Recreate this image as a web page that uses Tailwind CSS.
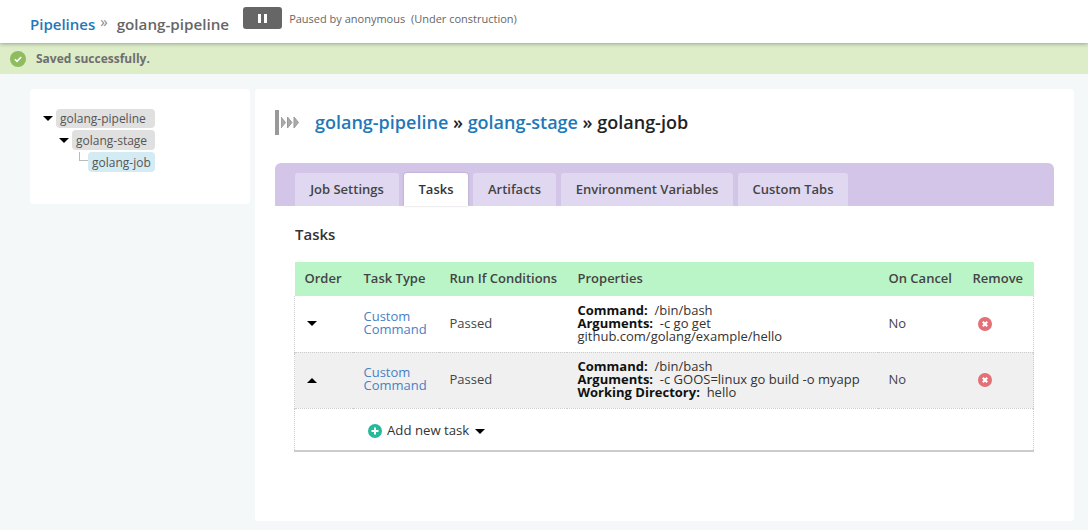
<!DOCTYPE html>
<html lang="en">
<head>
    <meta charset="UTF-8">
    <title>Job Tasks</title>
    <script src="https://cdn.jsdelivr.net/npm/@tailwindcss/browser@4"></script>
</head>
<body class="bg-[#f4f8f9] font-['Open_Sans',sans-serif] h-[530px] overflow-hidden text-[#333]">
    <!-- Header -->
    <div class="h-[43px] bg-white shadow-[0_1px_4px_rgba(0,0,0,0.3)] relative flex items-start pl-[30px]">
        <a class="text-[15px] font-semibold text-[#1f78b8] mt-[13px] leading-[22px]">Pipelines</a>
        <span class="text-[#888] text-[15px] ml-[5px] mt-[10px] leading-[22px]">»</span>
        <span class="text-[15.2px] font-semibold text-[#666] ml-[9px] mt-[13px] leading-[22px]">golang-pipeline</span>
        <div class="w-[39px] h-[22px] bg-[#666] rounded-[3px] ml-[14px] mt-[7px] flex items-center justify-center gap-[3px]">
            <span class="w-[3px] h-[9px] bg-white"></span>
            <span class="w-[3px] h-[9px] bg-white"></span>
        </div>
        <span class="text-[11px] text-[#666] ml-[7px] mt-[11px] leading-[16px] whitespace-pre">Paused by anonymous  (Under construction)</span>
    </div>

    <!-- Flash message -->
    <div class="h-[31px] bg-[#dcedc8] flex items-center pl-[10px]">
        <svg width="16" height="16" viewBox="0 0 16 16">
            <circle cx="8" cy="8" r="8" fill="#8fbc5f"/>
            <path d="M4.8 8.2l2.2 2.2 4.2-4.4" fill="none" stroke="#fff" stroke-width="1.6"/>
        </svg>
        <span class="text-[12px] font-bold text-[#6f6f6f] ml-[10px]">Saved successfully.</span>
    </div>

    <div class="flex pl-[30px] pt-[15px] gap-[5px]">
        <!-- Tree -->
        <div class="w-[220px] h-[115px] bg-white rounded-[3px] pt-[20px] pl-[13px] text-[12px] text-[#555] leading-[20px]">
            <div class="flex items-center">
                <span class="w-[13px] flex justify-start"><span class="border-x-[5px] border-x-transparent border-t-[5px] border-t-black"></span></span>
                <span class="w-[99px] h-[19px] bg-[#e0e0e0] rounded-[4px] pl-[4px]">golang-pipeline</span>
            </div>
            <div class="flex items-center mt-[2px] pl-[16px]">
                <span class="w-[13px] flex justify-start"><span class="border-x-[5px] border-x-transparent border-t-[5px] border-t-black"></span></span>
                <span class="w-[83px] h-[20px] bg-[#e0e0e0] rounded-[4px] pl-[4px] pt-px">golang-stage</span>
            </div>
            <div class="flex items-start mt-[2px] pl-[36px]">
                <span class="w-[9px] h-[9px] border-l border-b border-[#bbb]"></span>
                <span class="w-[67px] h-[20px] bg-[#d3ebf3] rounded-[4px] pl-[4px] pt-px">golang-job</span>
            </div>
        </div>

        <!-- Main card -->
        <div class="w-[819px] h-[432px] bg-white rounded-[3px] px-[20px] pt-[18px]">
            <div class="flex items-center h-[30px]">
                <div class="w-[25px] h-[25px] flex items-center bg-gradient-to-r from-[#999] from-[4px] to-white to-[4px]">
                    <svg class="ml-[6px]" width="19" height="13" viewBox="0 0 19 13">
                        <path d="M0 1l4.5 5.5L0 12zM6.5 1L11 6.5 6.5 12zM13 1l4.5 5.5L13 12z" fill="#aaa" stroke="#999" stroke-width="1"/>
                    </svg>
                </div>
                <div class="ml-[15px] text-[18px] font-semibold text-[#222] leading-[28px]">
                    <a class="text-[#1f78b8]">golang-pipeline</a> » <a class="text-[#1f78b8]">golang-stage</a> » golang-job
                </div>
            </div>

            <!-- Tabs -->
            <div class="mt-[26px] h-[43px] bg-[#d3c5e8] rounded-t-[6px] flex items-end pl-[20px] gap-[5px] text-[13px] font-semibold text-[#444]">
                <div class="h-[33px] w-[104px] bg-[#e0d8f0] rounded-t-[3px] text-center leading-[33px]">Job Settings</div>
                <div class="h-[33px] w-[64px] bg-white rounded-t-[3px] text-center leading-[33px] text-[#333] shadow-[0_0_2px_rgba(0,0,0,0.25)]">Tasks</div>
                <div class="h-[33px] w-[83px] bg-[#e0d8f0] rounded-t-[3px] text-center leading-[33px]">Artifacts</div>
                <div class="h-[33px] w-[172px] bg-[#e0d8f0] rounded-t-[3px] text-center leading-[33px]">Environment Variables</div>
                <div class="h-[33px] w-[110px] bg-[#e0d8f0] rounded-t-[3px] text-center leading-[33px]">Custom Tabs</div>
            </div>

            <!-- Tasks table -->
            <div class="px-[20px]">
                <h3 class="text-[15px] font-semibold text-[#333] mt-[17px] leading-[22px] mb-[17px]">Tasks</h3>
                <table class="-ml-px w-[739px] table-fixed border-collapse text-[13px] text-[#444] border-b-2 border-b-[#ccc]">
                    <colgroup>
                        <col class="w-[58px]"><col class="w-[86px]"><col class="w-[128px]"><col class="w-[311px]"><col class="w-[84px]"><col class="w-[72px]">
                    </colgroup>
                    <thead>
                        <tr class="h-[34px] bg-[#baf5c8] text-left">
                            <th class="pl-[10px] font-semibold">Order</th>
                            <th class="pl-[11px] font-semibold">Task Type</th>
                            <th class="pl-[11px] font-semibold">Run If Conditions</th>
                            <th class="pl-[11px] font-semibold">Properties</th>
                            <th class="pl-[11px] font-semibold">On Cancel</th>
                            <th class="pl-[11px] font-semibold">Remove</th>
                        </tr>
                    </thead>
                    <tbody>
                        <tr class="h-[56px] border-b border-dotted border-b-[#ccc]">
                            <td class="pl-[12px] border-l border-dotted border-l-[#ccc]"><span class="block w-0 border-x-[5px] border-x-transparent border-t-[5px] border-t-black"></span></td>
                            <td class="pl-[11px] pb-[2px] text-[#4a80c4] leading-[13px]">Custom<br>Command</td>
                            <td class="pl-[11px]">Passed</td>
                            <td class="pl-[11px] leading-[13px] text-[#333]"><b class="text-[#111]">Command:</b>&nbsp; /bin/bash<br><b class="text-[#111]">Arguments:</b>&nbsp; -c go get<br>github.com/golang/example/hello</td>
                            <td class="pl-[11px]">No</td>
                            <td class="pl-[16px] border-r border-dotted border-r-[#ccc]">
                                <svg width="14" height="14" viewBox="0 0 14 14"><circle cx="7" cy="7" r="7" fill="#e27076"/><path d="M4.8 4.8l4.4 4.4M9.2 4.8l-4.4 4.4" stroke="#fff" stroke-width="2.2"/></svg>
                            </td>
                        </tr>
                        <tr class="h-[56px] bg-[#f0f0f0] border-b border-dotted border-b-[#ccc]">
                            <td class="pl-[12px] border-l border-dotted border-l-[#ccc]"><span class="block w-0 border-x-[5px] border-x-transparent border-b-[5px] border-b-black"></span></td>
                            <td class="pl-[11px] pb-[2px] text-[#4a80c4] leading-[13px]">Custom<br>Command</td>
                            <td class="pl-[11px]">Passed</td>
                            <td class="pl-[11px] pb-[2px] leading-[13px] text-[#333]"><b class="text-[#111]">Command:</b>&nbsp; /bin/bash<br><b class="text-[#111]">Arguments:</b>&nbsp; -c GOOS=linux go build -o myapp<br><b class="text-[#111]">Working Directory:</b>&nbsp; hello</td>
                            <td class="pl-[11px]">No</td>
                            <td class="pl-[16px] border-r border-dotted border-r-[#ccc]">
                                <svg width="14" height="14" viewBox="0 0 14 14"><circle cx="7" cy="7" r="7" fill="#e27076"/><path d="M4.8 4.8l4.4 4.4M9.2 4.8l-4.4 4.4" stroke="#fff" stroke-width="2.2"/></svg>
                            </td>
                        </tr>
                        <tr class="h-[43px]">
                            <td colspan="6" class="pl-[73px] pt-[4px] border-x border-dotted border-x-[#ccc]">
                                <div class="flex items-center text-[13.2px] text-[#333]">
                                    <svg width="14" height="14" viewBox="0 0 14 14"><circle cx="7" cy="7" r="7" fill="#26b99a"/><path d="M7 3.5v7M3.5 7h7" stroke="#fff" stroke-width="2"/></svg>
                                    <span class="ml-[5px]">Add new task</span>
                                    <span class="ml-[6px] border-x-[5px] border-x-transparent border-t-[5px] border-t-black"></span>
                                </div>
                            </td>
                        </tr>
                    </tbody>
                </table>
            </div>
        </div>
    </div>
</body>
</html>
